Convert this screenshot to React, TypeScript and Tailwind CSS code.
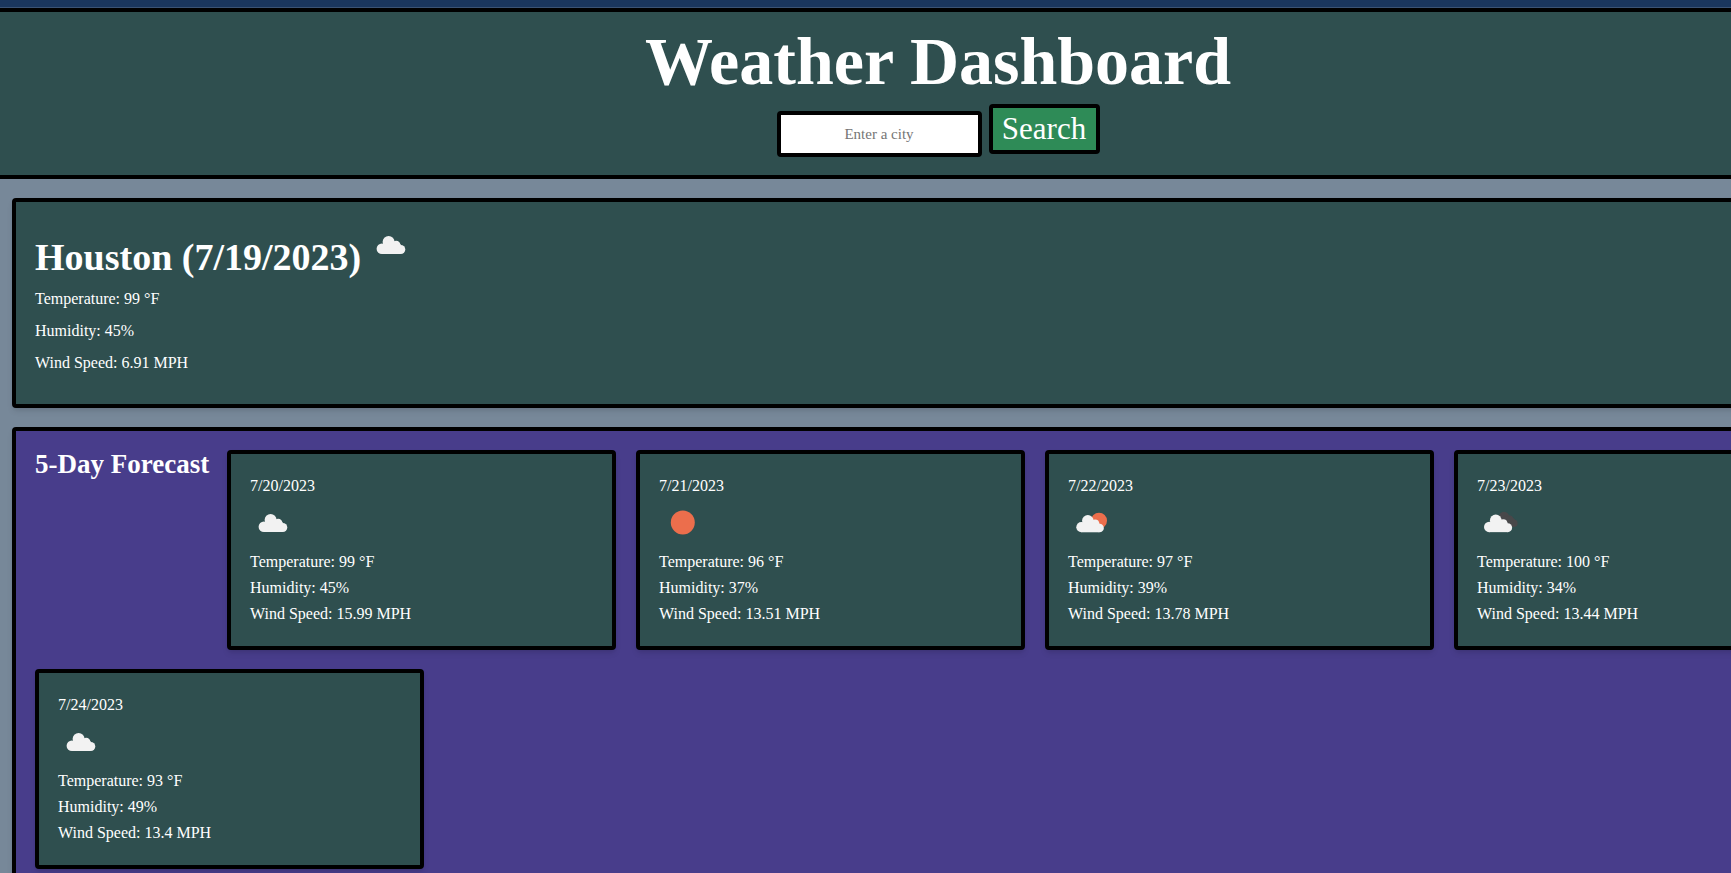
import React from "react";

type Sky = "cloud" | "sun" | "partly" | "broken";

interface Day {
  date: string;
  sky: Sky;
  temperature: string;
  humidity: string;
  wind: string;
}

const days: Day[] = [
  { date: "7/20/2023", sky: "cloud", temperature: "99", humidity: "45", wind: "15.99" },
  { date: "7/21/2023", sky: "sun", temperature: "96", humidity: "37", wind: "13.51" },
  { date: "7/22/2023", sky: "partly", temperature: "97", humidity: "39", wind: "13.78" },
  { date: "7/23/2023", sky: "broken", temperature: "100", humidity: "34", wind: "13.44" },
  { date: "7/24/2023", sky: "cloud", temperature: "93", humidity: "49", wind: "13.4" },
];

function Cloud({ transform }: { transform: string }) {
  return (
    <g transform={transform} fill="#f2f2f2">
      <circle cx="5.3" cy="12.7" r="5.3" />
      <circle cx="12" cy="6" r="6" />
      <circle cx="19.6" cy="9" r="4.2" />
      <circle cx="24.2" cy="13.5" r="4.5" />
      <path d="M5.3 18 V8 H24 V18 Z" />
    </g>
  );
}

function SkyIcon({ sky }: { sky: Sky }) {
  return (
    <svg viewBox="0 0 50 50" className="block size-[50px] shrink-0" role="img" aria-label={sky}>
      {sky === "sun" && <circle cx="23.8" cy="23.5" r="12" fill="#ec6e4c" />}
      {sky === "partly" && <circle cx="31" cy="21.7" r="8" fill="#ec6e4c" />}
      {sky === "broken" && (
        <g fill="#48484a">
          <circle cx="27" cy="18" r="5.2" />
          <circle cx="32" cy="20.5" r="4.2" />
          <circle cx="36.8" cy="24.2" r="3.8" />
          <path d="M27 18 L34.5 17 L39 22 L36 28 H27 Z" />
        </g>
      )}
      {sky === "cloud" && <Cloud transform="translate(8.6 15)" />}
      {sky === "partly" && <Cloud transform="translate(8.3 16) scale(.96)" />}
      {sky === "broken" && <Cloud transform="translate(7 15.5) scale(.98)" />}
    </svg>
  );
}

function DayCard({ day }: { day: Day }) {
  return (
    <article className="w-[389px] shrink-0 rounded border-4 border-black bg-[#2f4f4f] p-[19px] shadow-md">
      <h4 className="leading-[26px]">{day.date}</h4>
      <SkyIcon sky={day.sky} />
      <p className="leading-[26px]">Temperature: {day.temperature} °F</p>
      <p className="leading-[26px]">Humidity: {day.humidity}%</p>
      <p className="leading-[26px]">Wind Speed: {day.wind} MPH</p>
    </article>
  );
}

export default function App() {
  return (
    <div className="min-h-screen overflow-hidden bg-[#778899] font-['Georgia','Liberation_Serif',serif] text-base text-white">
      <div className="w-[calc(100%+145px)]">
        <div className="h-2 border-b border-[#3b5374] bg-[#1a365d]" />
        <header className="border-y-4 border-black bg-[#2f4f4f] pt-4 pb-[18px] text-center">
          <h1 className="mb-[10px] text-[68px] leading-[66px] font-bold">Weather Dashboard</h1>
          <form className="flex items-end justify-center gap-[7px]" onSubmit={(e) => e.preventDefault()}>
            <input
              type="text"
              aria-label="City"
              placeholder="Enter a city"
              className="h-[46px] w-[205px] rounded border-4 border-black bg-white text-center text-[15px] text-black placeholder:text-[#757575]"
            />
            <button
              type="submit"
              className="mb-[3px] h-[50px] w-[111px] rounded border-4 border-black bg-[#2e8b57] text-[31px] leading-[42px]"
            >
              Search
            </button>
          </form>
        </header>
        <main className="flex flex-col gap-[19px] py-[19px] pl-3">
          <section className="rounded border-4 border-black bg-[#2f4f4f] px-[19px] pt-[19px] pb-[25px] shadow-md">
            <div className="flex gap-[7px]">
              <h2 className="pt-4 text-[38px] leading-10 font-bold">Houston (7/19/2023)</h2>
              <SkyIcon sky="cloud" />
            </div>
            <p className="mt-[6px] leading-8">Temperature: 99 °F</p>
            <p className="leading-8">Humidity: 45%</p>
            <p className="leading-8">Wind Speed: 6.91 MPH</p>
          </section>
          <section className="flex flex-wrap gap-x-5 gap-y-[19px] rounded border-4 border-black bg-[#483d8b] p-[19px] shadow-md">
            <h3 className="w-[172px] text-[27px] leading-7 font-bold whitespace-nowrap">5-Day Forecast</h3>
            {days.map((day) => (
              <DayCard key={day.date} day={day} />
            ))}
          </section>
        </main>
      </div>
    </div>
  );
}
